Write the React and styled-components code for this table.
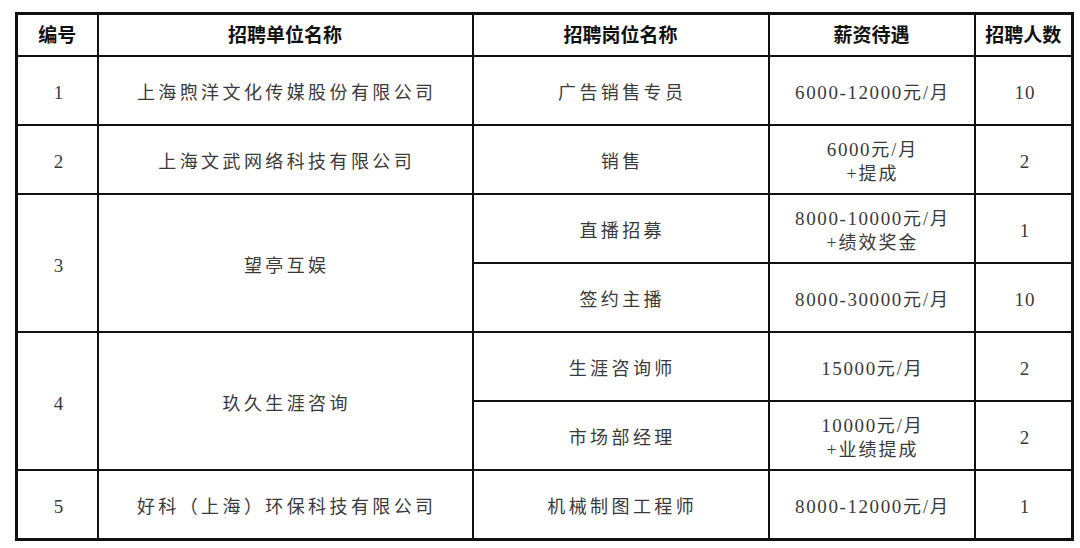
import React from 'react';
import styled, { createGlobalStyle } from 'styled-components';

const GlobalStyle = createGlobalStyle`
  html, body {
    margin: 0;
    padding: 0;
    background: #ffffff;
  }
  body {
    padding: 12px 0 0 15px;
    font-family: "Liberation Serif", "Noto Sans CJK SC", serif;
  }
`;

const Table = styled.table`
  border-collapse: collapse;
  table-layout: fixed;
  width: 1056px;
  border: 3px solid #111;
`;

const HeadCell = styled.th`
  height: 37px;
  padding: 0 0 3px;
  border: 2px solid #111;
  font-family: "Noto Sans CJK SC", sans-serif;
  font-weight: 700;
  font-size: 19px;
  color: #111;
  text-align: center;
  vertical-align: middle;
`;

const Cell = styled.td`
  height: 62px;
  padding: 5px 0 0;
  border: 2px solid #111;
  font-family: "Liberation Serif", "Noto Sans CJK SC", serif;
  font-size: 18px;
  font-weight: 400;
  line-height: 24px;
  color: #3a3a3a;
  text-align: center;
  vertical-align: middle;
  letter-spacing: ${(p) => (p.$tight ? '2px' : '3.4px')};
  padding-left: ${(p) => (p.$tight ? '2px' : '3.4px')};
`;

const Num = styled.span`
  font-family: "Liberation Serif", serif;
  font-size: 19px;
  letter-spacing: ${(p) => (p.$wide ? '1.6px' : '1px')};
`;

const columns = [
  { title: '编号', width: 81 },
  { title: '招聘单位名称', width: 375 },
  { title: '招聘岗位名称', width: 296 },
  { title: '薪资待遇', width: 206 },
  { title: '招聘人数', width: 98 },
];

// digits and dashes go in a serif span, Chinese falls through to CJK
const Mixed = ({ text }) =>
  text.split(/([0-9\-]+)/).map((part, i) =>
    /^[0-9\-]+$/.test(part) ? (
      <Num key={i} $wide>
        {part}
      </Num>
    ) : (
      <React.Fragment key={i}>{part}</React.Fragment>
    )
  );

const Lines = ({ text }) =>
  text.split('\n').map((line, i) => (
    <div key={i}>
      <Mixed text={line} />
    </div>
  ));

const rows = [
  { no: '1', company: '上海煦洋文化传媒股份有限公司', jobs: [['广告销售专员', '6000-12000元/月', '10']] },
  { no: '2', company: '上海文武网络科技有限公司', jobs: [['销售', '6000元/月\n+提成', '2']] },
  {
    no: '3',
    company: '望亭互娱',
    jobs: [
      ['直播招募', '8000-10000元/月\n+绩效奖金', '1'],
      ['签约主播', '8000-30000元/月', '10'],
    ],
  },
  {
    no: '4',
    company: '玖久生涯咨询',
    jobs: [
      ['生涯咨询师', '15000元/月', '2'],
      ['市场部经理', '10000元/月\n+业绩提成', '2'],
    ],
  },
  { no: '5', company: '好科（上海）环保科技有限公司', jobs: [['机械制图工程师', '8000-12000元/月', '1']] },
];

export default function App() {
  return (
    <>
      <GlobalStyle />
      <Table>
        <colgroup>
          {columns.map((c) => (
            <col key={c.title} style={{ width: c.width }} />
          ))}
        </colgroup>
        <thead>
          <tr>
            {columns.map((c) => (
              <HeadCell key={c.title}>{c.title}</HeadCell>
            ))}
          </tr>
        </thead>
        <tbody>
          {rows.map((r) =>
            r.jobs.map((job, j) => (
              <tr key={r.no + '-' + j}>
                {j === 0 && (
                  <>
                    <Cell rowSpan={r.jobs.length}>
                      <Num>{r.no}</Num>
                    </Cell>
                    <Cell rowSpan={r.jobs.length}>{r.company}</Cell>
                  </>
                )}
                <Cell>{job[0]}</Cell>
                <Cell $tight>
                  <Lines text={job[1]} />
                </Cell>
                <Cell>
                  <Num>{job[2]}</Num>
                </Cell>
              </tr>
            ))
          )}
        </tbody>
      </Table>
    </>
  );
}
